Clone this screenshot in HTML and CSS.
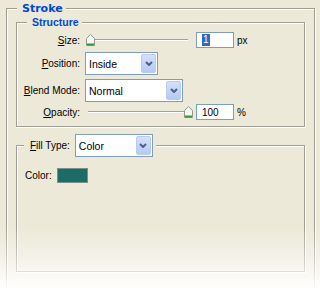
FILE: index.html
```html
<!DOCTYPE html>
<html lang="en">
<head>
	<meta charset="UTF-8">
	<title>Stroke</title>
	<link rel="stylesheet" href="styles.css">
</head>
<body>
	<fieldset class="group outer">
		<legend class="title">Stroke</legend>

		<fieldset class="group structure">
			<legend class="subtitle">Structure</legend>

			<div class="row row-size">
				<label class="lbl"><u>S</u>ize:</label>
				<div class="slider">
					<div class="track"></div>
					<svg class="thumb" style="left:0px" width="9" height="12" viewBox="0 0 9 12">
						<path d="M0.5 11.5V4.5L4.5 0.5L8.5 4.5V11.5Z" fill="#f6f6f2" stroke="#8e9a8e"/>
						<path d="M1 10.5H8" stroke="#2f9f3a" stroke-width="2"/>
					</svg>
				</div>
				<div class="field"><span class="sel">1</span></div>
				<span class="unit">px</span>
			</div>

			<div class="row row-pos">
				<label class="lbl"><u>P</u>osition:</label>
				<div class="combo combo-pos">
					<span class="combo-text">Inside</span>
					<span class="combo-btn"><svg width="8" height="5" viewBox="0 0 8 5"><path d="M1 1L4 4L7 1" fill="none" stroke="#4d6185" stroke-width="2"/></svg></span>
				</div>
			</div>

			<div class="row row-blend">
				<label class="lbl"><u>B</u>lend Mode:</label>
				<div class="combo combo-blend">
					<span class="combo-text">Normal</span>
					<span class="combo-btn"><svg width="8" height="5" viewBox="0 0 8 5"><path d="M1 1L4 4L7 1" fill="none" stroke="#4d6185" stroke-width="2"/></svg></span>
				</div>
			</div>

			<div class="row row-opacity">
				<label class="lbl"><u>O</u>pacity:</label>
				<div class="slider">
					<div class="track"></div>
					<svg class="thumb" style="left:98px" width="9" height="12" viewBox="0 0 9 12">
						<path d="M0.5 11.5V4.5L4.5 0.5L8.5 4.5V11.5Z" fill="#f6f6f2" stroke="#8e9a8e"/>
						<path d="M1 10.5H8" stroke="#2f9f3a" stroke-width="2"/>
					</svg>
				</div>
				<div class="field">100</div>
				<span class="unit">%</span>
			</div>
		</fieldset>

		<fieldset class="group fill">
			<legend class="fill-legend">
				<span class="fill-head">
					<label class="fill-lbl"><u>F</u>ill Type:</label>
					<span class="combo combo-fill">
						<span class="combo-text">Color</span>
						<span class="combo-btn"><svg width="8" height="5" viewBox="0 0 8 5"><path d="M1 1L4 4L7 1" fill="none" stroke="#4d6185" stroke-width="2"/></svg></span>
					</span>
				</span>
			</legend>

			<div class="color-row">
				<span class="color-lbl">Color:</span>
				<span class="swatch"></span>
			</div>
		</fieldset>
	</fieldset>
</body>
</html>
```

FILE: styles.css
```css
* {
	margin: 0;
	padding: 0;
	box-sizing: border-box;
}
html,
body {
	height: 100%;
}
body {
	background: #ece9d8;
	font-family: "Liberation Sans", Arial, sans-serif;
	font-size: 10px;
	color: #000;
	overflow: hidden;
}
/* white fade over the bottom of the panel */
body::after {
	content: "";
	position: fixed;
	left: 0;
	right: 0;
	top: 226px;
	bottom: 0;
	background: linear-gradient(to bottom, rgba(255,255,255,0) 0, rgba(255,255,255,0.55) 40px, #fff 64px);
	pointer-events: none;
}

/* etched group boxes */
.group {
	border: 1px solid #a09e94;
	box-shadow: 1px 1px 0 #fff, inset 1px 1px 0 #fff;
	min-width: 0;
}
.outer {
	margin: 1px 5px 0 6px;
	padding: 0 9px;
	height: 292px;
}
.title {
	margin-left: 1px;
	padding: 0 3px 0 5px;
	font-family: "DejaVu Sans", Verdana, sans-serif;
	font-weight: bold;
	font-size: 11px;
	line-height: 15px;
	color: #0046d5;
	background: #ece9d8;
}
.structure {
	padding: 3px 0 6px 0;
}
.subtitle {
	margin-left: 10px;
	padding: 0 3px 0 5px;
	font-weight: bold;
	font-size: 10.5px;
	line-height: 13px;
	color: #0046d5;
	background: #ece9d8;
}

/* rows */
.row {
	display: flex;
	align-items: center;
}
.lbl {
	width: 63px;
	margin-right: 5px;
	text-align: right;
}
.row-size {
	height: 16px;
}
.row-pos {
	height: 23px;
	margin-top: 4px;
}
.row-blend {
	height: 23px;
	margin-top: 4px;
}
.row-opacity {
	height: 16px;
	margin-top: 2px;
}

/* slider */
.slider {
	position: relative;
	width: 107px;
	height: 16px;
	margin-left: 1px;
	display: flex;
	align-items: center;
}
.track {
	width: 100px;
	height: 2px;
	margin-left: 2px;
	border-top: 1px solid #a3a196;
	border-bottom: 1px solid #fff;
}
.thumb {
	position: absolute;
	top: 2px;
}

/* text fields */
.field {
	width: 38px;
	height: 16px;
	margin-left: 3px;
	padding-left: 5px;
	border: 1px solid #7f9db9;
	background: #fff;
	display: flex;
	align-items: center;
}
.sel {
	background: #316ac5;
	color: #fff;
	line-height: 12px;
	padding: 0 1px;
}
.unit {
	margin-left: 3px;
}

/* combo boxes */
.combo {
	display: flex;
	align-items: stretch;
	height: 23px;
	padding: 1px;
	border: 1px solid #7f9db9;
	background: #fff;
}
.combo-text {
	flex: 1;
	display: flex;
	align-items: center;
	padding-left: 2px;
	font-size: 10.5px;
}
.combo-btn {
	width: 15px;
	display: flex;
	align-items: center;
	justify-content: center;
	border: 1px solid #b9cbf3;
	border-radius: 2px;
	background: linear-gradient(to bottom, #d4e0fb, #b6c9f5);
}
.combo-pos {
	width: 73px;
}
.combo-blend {
	width: 98px;
}
.combo-fill {
	width: 78px;
}

/* fill section */
.fill {
	margin-top: 7px;
	padding-bottom: 88px;
}
.fill-legend {
	margin-left: 7px;
	margin-bottom: -5px;
	padding: 0 3px 0 6px;
	background: #ece9d8;
}
.fill-head {
	display: flex;
	align-items: center;
}
.fill-lbl {
	margin-right: 5px;
}
.color-row {
	display: flex;
	align-items: center;
	margin-top: 16px;
	padding-left: 8px;
}
.color-lbl {
	margin-right: 5px;
}
.swatch {
	width: 31px;
	height: 15px;
	border: 1px solid #7d8f8c;
	background: #1c6b66;
}
```
